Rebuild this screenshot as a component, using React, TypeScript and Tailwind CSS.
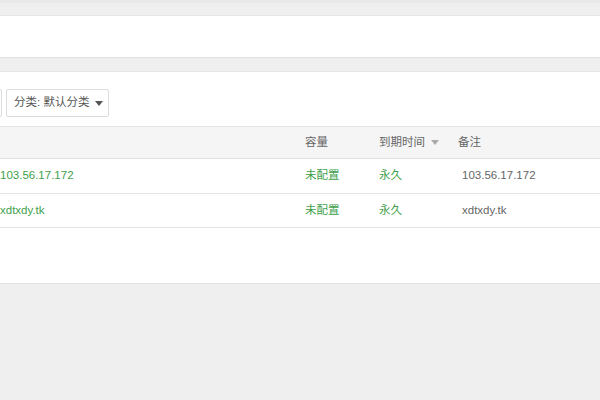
const rows = [
  { name: "103.56.17.172", cap: "未配置", exp: "永久", note: "103.56.17.172" },
  { name: "xdtxdy.tk", cap: "未配置", exp: "永久", note: "xdtxdy.tk" },
];

function Caret({ className }: { className: string }) {
  return (
    <svg width="8" height="5" viewBox="0 0 8 5" className={className}>
      <path d="M0 0h8L4 5z" fill="currentColor" />
    </svg>
  );
}

export default function App() {
  return (
    <div
      className="w-[600px] h-[400px] overflow-hidden bg-[#efefef] text-[11.5px] text-[#555]"
      style={{ fontFamily: '"Liberation Sans", "Noto Sans CJK SC", sans-serif' }}
    >
      <div className="h-[3px] bg-[#e9e9e9]" />
      <div className="mt-[12px] h-[43px] bg-white border-t border-[#e6e6e6] border-b border-b-[#e2e2e2]" />

      <div className="mt-[13px] h-[213px] bg-white border-t border-[#e6e6e6] border-b border-b-[#e2e2e2]">
        {/* toolbar */}
        <div className="flex items-center gap-[4px] pt-[17px] pb-[9px]">
          <div className="-ml-[40px] w-[42px] h-[28px] border border-[#dcdcdc] rounded-[2px] bg-white" />
          <button className="h-[28px] w-[103px] flex items-center gap-[6px] pl-[7px] border border-[#dcdcdc] rounded-[2px] bg-white text-[#555]">
            <span>分类: 默认分类</span>
            <Caret className="text-[#555]" />
          </button>
        </div>

        {/* table */}
        <div className="border-t border-[#e4e4e4]">
          <div className="grid grid-cols-[305px_74px_79px_1fr] h-[32px] items-center bg-[#f5f5f5] border-b border-[#e2e2e2] text-[#666]">
            <span />
            <span>容量</span>
            <span className="flex items-center gap-[6px]">
              到期时间 <Caret className="text-[#aaa]" />
            </span>
            <span>备注</span>
          </div>
          {rows.map((r, i) => (
            <div
              key={r.name}
              className={`grid grid-cols-[305px_74px_83px_1fr] items-center border-b border-[#e4e4e4] ${i === 0 ? "h-[35px]" : "h-[34px]"}`}
            >
              <span className="text-[#3f9f4c]">{r.name}</span>
              <span className="text-[#3f9f4c]">{r.cap}</span>
              <span className="text-[#3f9f4c]">{r.exp}</span>
              <span className="text-[#666]">{r.note}</span>
            </div>
          ))}
        </div>
      </div>
    </div>
  );
}
